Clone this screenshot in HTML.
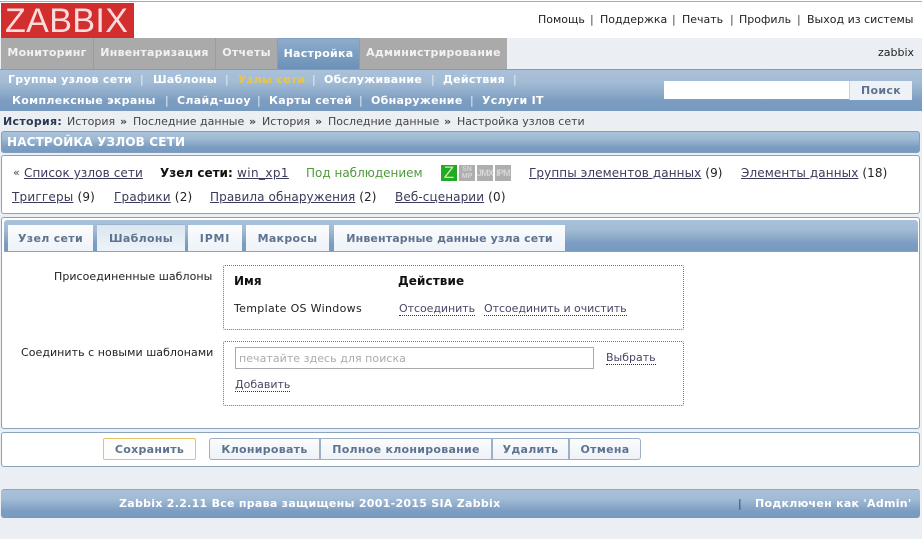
<!DOCTYPE html>
<html><head><meta charset="utf-8">
<style>
html,body{margin:0;padding:0;}
body{width:922px;height:539px;overflow:hidden;position:relative;background:#ebeef2;font-family:"DejaVu Sans","Liberation Sans",sans-serif;font-size:11px;color:#222;}
.a{position:absolute;white-space:nowrap;line-height:14px;}
.b{font-weight:bold;}
.box{position:absolute;background:#fff;border:1px solid #8ba3bb;border-radius:3px;box-sizing:border-box;}
.grad{position:absolute;background:linear-gradient(#a9c1d9 0,#a3bcd5 30%,#7c9dc2 75%,#779abf 100%);box-sizing:border-box;}
.w{color:#fff;font-weight:bold;letter-spacing:.28px;}
.sub{color:#fff;font-weight:bold;letter-spacing:.3px;}
.sep{color:#e5edf5;font-weight:normal;}
.u{text-decoration:underline;color:#3a3a5a;letter-spacing:.1px;}
.d{color:#4a4666;border-bottom:1px dotted #333;line-height:13px;}
.tab{position:absolute;top:225px;height:26px;background:linear-gradient(#fbfcfd,#eef3f8);color:#5d7390;font-weight:bold;text-align:center;line-height:27px;letter-spacing:.3px;}
.btn{position:absolute;top:438px;height:22px;box-sizing:border-box;border:1px solid #9db0c4;background:linear-gradient(#fafcfd,#eef2f6);color:#5d7390;font-weight:bold;text-align:center;line-height:22px;letter-spacing:.28px;}
.dash{position:absolute;left:223px;width:461px;box-sizing:border-box;border:1px dotted #777;border-radius:2px;}
.top{position:absolute;height:31px;top:38px;background:#aaa;color:#f2f2f2;font-weight:bold;line-height:30px;text-align:center;box-sizing:border-box;letter-spacing:.25px;}
.ic{position:absolute;top:165px;width:16px;height:16px;overflow:hidden;background:#aeaeae;color:#d6d6d6;text-align:center;font-family:'Liberation Sans',sans-serif;font-weight:bold;}
.bc{position:absolute;top:115px;white-space:nowrap;line-height:14px;color:#444;}
</style></head><body>
<div style="position:absolute;left:0;top:0;width:922px;height:38px;background:#fff"></div>
<div style="position:absolute;left:0;top:1px;width:922px;height:1px;background:#aaa"></div>
<div style="position:absolute;left:1px;top:3px;width:133px;height:35px;background:#d32e2e"></div>
<div class="a" style="left:5px;top:3px;height:35px;font-family:'Liberation Sans',sans-serif;font-size:34px;line-height:36px;color:#fbdcdc;letter-spacing:.4px">ZABBIX</div>

<div class="a" style="left:538px;top:13px;color:#222">Помощь</div>
<div class="a" style="left:590px;top:13px;color:#444">|</div>
<div class="a" style="left:600px;top:13px;color:#222">Поддержка</div>
<div class="a" style="left:672px;top:13px;color:#444">|</div>
<div class="a" style="left:682px;top:13px;color:#222">Печать</div>
<div class="a" style="left:730px;top:13px;color:#444">|</div>
<div class="a" style="left:739px;top:13px;color:#222">Профиль</div>
<div class="a" style="left:797px;top:13px;color:#444">|</div>
<div class="a" style="left:807px;top:13px;color:#222">Выход из системы</div>

<div class="top" style="left:1px;width:92px;">Мониторинг</div>
<div class="top" style="left:93px;width:122px;border-left:1px solid #9c9c9c">Инвентаризация</div>
<div class="top" style="left:215px;width:62px;border-left:1px solid #9c9c9c">Отчеты</div>
<div class="top" style="left:277px;width:83px;background:linear-gradient(#8eaccb,#6c90b8);border:1px solid #7fa0c2;border-bottom:0;color:#fff">Настройка</div>
<div class="top" style="left:360px;width:147px;">Администрирование</div>
<div class="a" style="left:878px;top:46px;color:#222">zabbix</div>

<div class="grad" style="left:0;top:69px;width:922px;height:42px;border-top:1px solid #7f9dbd"></div>
<div class="a sub" style="left:8px;top:73px">Группы узлов сети</div>
<div class="a sep" style="left:140px;top:73px">|</div>
<div class="a sub" style="left:153px;top:73px">Шаблоны</div>
<div class="a sep" style="left:225px;top:73px">|</div>
<div class="a b" style="left:238px;top:73px;color:#f0c53a;letter-spacing:.3px">Узлы сети</div>
<div class="a sep" style="left:312px;top:73px">|</div>
<div class="a sub" style="left:324px;top:73px">Обслуживание</div>
<div class="a sep" style="left:431px;top:73px">|</div>
<div class="a sub" style="left:443px;top:73px">Действия</div>
<div class="a sep" style="left:513px;top:73px">|</div>
<div class="a sub" style="left:12px;top:94px">Комплексные экраны</div>
<div class="a sep" style="left:165px;top:94px">|</div>
<div class="a sub" style="left:177px;top:94px">Слайд-шоу</div>
<div class="a sep" style="left:257px;top:94px">|</div>
<div class="a sub" style="left:269px;top:94px">Карты сетей</div>
<div class="a sep" style="left:359px;top:94px">|</div>
<div class="a sub" style="left:371px;top:94px">Обнаружение</div>
<div class="a sep" style="left:470px;top:94px">|</div>
<div class="a sub" style="left:482px;top:94px">Услуги IT</div>

<div style="position:absolute;left:664px;top:81px;width:185px;height:18px;background:#fff"></div>
<div class="a b" style="left:849px;top:81px;width:63px;height:19px;background:#eef2f6;color:#5d7390;text-align:center;line-height:19px;box-sizing:border-box;border-left:1px solid #c5d3e0;letter-spacing:.3px">Поиск</div>

<div class="bc" style="left:3px"><b style="color:#2b3a55;letter-spacing:.3px">История:</b></div>
<div class="bc" style="left:67px">История</div>
<div class="bc" style="left:120px"><b>»</b></div>
<div class="bc" style="left:133px">Последние данные</div>
<div class="bc" style="left:249px"><b>»</b></div>
<div class="bc" style="left:262px">История</div>
<div class="bc" style="left:315px"><b>»</b></div>
<div class="bc" style="left:328px">Последние данные</div>
<div class="bc" style="left:444px"><b>»</b></div>
<div class="bc" style="left:457px">Настройка узлов сети</div>

<div class="grad" style="left:1px;top:131px;width:919px;height:22px;border-radius:3px;border:1px solid #7f9dbd"></div>
<div class="a" style="left:7px;top:135px;font-size:12px;color:#fff;font-weight:bold;letter-spacing:.15px">НАСТРОЙКА УЗЛОВ СЕТИ</div>

<div class="box" style="left:1px;top:155px;width:919px;height:59px"></div>
<div class="a" style="left:13px;top:166px;color:#444">«</div>
<div class="a u" style="left:24px;top:166px;font-size:12px">Список узлов сети</div>
<div class="a b" style="left:160px;top:166px;font-size:12px;color:#111">Узел сети:</div>
<div class="a u" style="left:237px;top:166px;font-size:12px;letter-spacing:.4px">win_xp1</div>
<div class="a" style="left:306px;top:166px;color:#4f9a3a;font-size:12px">Под наблюдением</div>
<div class="ic" style="left:441px;background:#22aa22;color:#cfe9b0;font-size:17px;line-height:16px;font-weight:normal">Z</div>
<div class="ic" style="left:459px;font-size:7px;line-height:7px;padding-top:1px;height:15px">SN<br>MP</div>
<div class="ic" style="left:477px;font-size:9px;line-height:16px;letter-spacing:-.8px;">JMX</div>
<div class="ic" style="left:495px;font-size:9px;line-height:16px;letter-spacing:-.8px;">IPM</div>
<div class="a" style="left:529px;top:166px;font-size:12px;letter-spacing:.1px"><span class="u">Группы элементов данных</span> (9)</div>
<div class="a" style="left:741px;top:166px;font-size:12px;letter-spacing:.1px"><span class="u">Элементы данных</span> (18)</div>
<div class="a" style="left:12px;top:190px;font-size:12px;letter-spacing:.2px"><span class="u" style="letter-spacing:.2px">Триггеры</span> (9)</div>
<div class="a" style="left:114px;top:190px;font-size:12px;letter-spacing:.2px"><span class="u" style="letter-spacing:.2px">Графики</span> (2)</div>
<div class="a" style="left:210px;top:190px;font-size:12px;letter-spacing:.1px"><span class="u">Правила обнаружения</span> (2)</div>
<div class="a" style="left:395px;top:190px;font-size:12px;letter-spacing:.2px"><span class="u">Веб-сценарии</span> (0)</div>

<div class="box" style="left:1px;top:217px;width:919px;height:212px"></div>
<div class="grad" style="left:4px;top:220px;width:914px;height:32px;border-radius:3px 3px 0 0;border-bottom:1px solid #88a3bf"></div>
<div class="tab" style="left:8px;width:85px">Узел сети</div>
<div class="tab" style="left:97px;width:88px;background:linear-gradient(#dbe6f0,#eef3f8);box-shadow:0 -1px 0 #9db5cc">Шаблоны</div>
<div class="tab" style="left:188px;width:54px;letter-spacing:.8px">IPMI</div>
<div class="tab" style="left:246px;width:83px">Макросы</div>
<div class="tab" style="left:334px;width:231px;letter-spacing:.12px">Инвентарные данные узла сети</div>

<div class="a" style="left:54px;top:270px;color:#222;letter-spacing:.05px">Присоединенные шаблоны</div>
<div class="a" style="left:21px;top:346px;color:#222;letter-spacing:.05px">Соединить с новыми шаблонами</div>

<div class="dash" style="top:265px;height:65px"></div>
<div class="a b" style="left:234px;top:274px;font-size:12px;color:#111">Имя</div>
<div class="a b" style="left:398px;top:274px;font-size:12px;color:#111;letter-spacing:.1px">Действие</div>
<div class="a" style="left:234px;top:302px;color:#222;letter-spacing:.32px">Template OS Windows</div>
<div class="a d" style="left:399px;top:302px;letter-spacing:-.05px">Отсоединить</div>
<div class="a d" style="left:484px;top:302px;letter-spacing:-.05px">Отсоединить и очистить</div>

<div class="dash" style="top:341px;height:65px"></div>
<div class="a" style="left:235px;top:347px;width:359px;height:22px;box-sizing:border-box;border:1px solid #aaa;background:#fff;color:#aaa;line-height:21px;padding-left:3px;letter-spacing:.05px">печатайте здесь для поиска</div>
<div class="a d" style="left:606px;top:351px">Выбрать</div>
<div class="a d" style="left:235px;top:378px">Добавить</div>

<div class="box" style="left:1px;top:432px;width:919px;height:35px"></div>
<div class="btn" style="left:103px;width:93px;border:1px solid #e8c068;border-radius:2px;background:#fdfdfb">Сохранить</div>
<div class="btn" style="left:209px;width:111px;border-radius:3px 0 0 3px">Клонировать</div>
<div class="btn" style="left:319px;width:173px;border-left:2px solid #9db0c4">Полное клонирование</div>
<div class="btn" style="left:491px;width:78px;border-left:2px solid #9db0c4">Удалить</div>
<div class="btn" style="left:568px;width:73px;border-left:2px solid #9db0c4;border-radius:0 3px 3px 0">Отмена</div>

<div class="grad" style="left:1px;top:489px;width:919px;height:29px;border-radius:3px;border-top:1px solid #8da7c1"></div>
<div class="a w" style="left:119px;top:497px">Zabbix 2.2.11 Все права защищены 2001-2015 SIA Zabbix</div>
<div class="a" style="left:738px;top:497px;color:#2d4763">|</div>
<div class="a w" style="left:755px;top:497px">Подключен как 'Admin'</div>
</body></html>
